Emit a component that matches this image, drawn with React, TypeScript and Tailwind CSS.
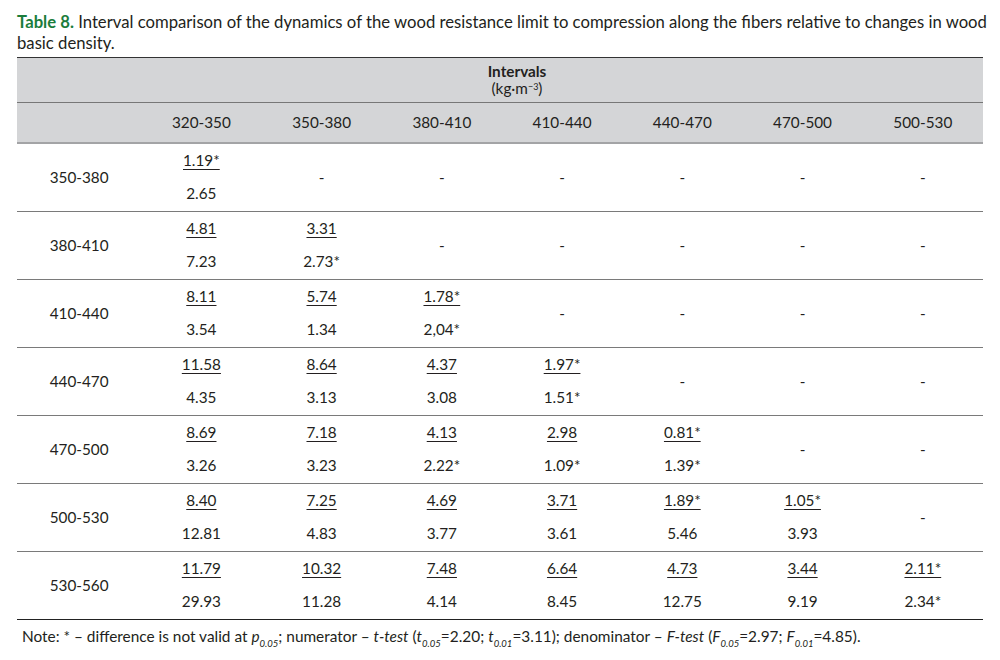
import React from "react";

type Cell = [string, string] | null;

const rows: { label: string; cells: Cell[] }[] = [
  { label: "350-380", cells: [["1.19*", "2.65"], null, null, null, null, null, null] },
  { label: "380-410", cells: [["4.81", "7.23"], ["3.31", "2.73*"], null, null, null, null, null] },
  { label: "410-440", cells: [["8.11", "3.54"], ["5.74", "1.34"], ["1.78*", "2,04*"], null, null, null, null] },
  { label: "440-470", cells: [["11.58", "4.35"], ["8.64", "3.13"], ["4.37", "3.08"], ["1.97*", "1.51*"], null, null, null] },
  { label: "470-500", cells: [["8.69", "3.26"], ["7.18", "3.23"], ["4.13", "2.22*"], ["2.98", "1.09*"], ["0.81*", "1.39*"], null, null] },
  { label: "500-530", cells: [["8.40", "12.81"], ["7.25", "4.83"], ["4.69", "3.77"], ["3.71", "3.61"], ["1.89*", "5.46"], ["1.05*", "3.93"], null] },
  { label: "530-560", cells: [["11.79", "29.93"], ["10.32", "11.28"], ["7.48", "4.14"], ["6.64", "8.45"], ["4.73", "12.75"], ["3.44", "9.19"], ["2.11*", "2.34*"]] },
];

const cols = ["320-350", "350-380", "380-410", "410-440", "440-470", "470-500", "500-530"];

function Sub({ children }: { children: React.ReactNode }) {
  return <sub className="italic text-[9.5px] align-[-3px]">{children}</sub>;
}

export default function App() {
  return (
    <div
      className="w-[1000px] h-[660px] bg-white text-[#231f20] overflow-hidden"
      style={{ fontFamily: "Lato, 'Open Sans', sans-serif" }}
    >
      <div className="pl-[17px] pr-[12px] pt-[12px] text-[16.7px] leading-[21px]">
        <span className="font-bold text-[#1b7d3c]">Table 8.</span> Interval comparison of the dynamics of the wood
        resistance limit to compression along the fibers relative to changes in wood basic density.
      </div>
      <table className="ml-[17px] mt-[3px] w-[966px] border-collapse text-[15.3px] table-fixed">
        <colgroup>
          <col className="w-[124px]" />
          {cols.map((c) => (
            <col key={c} className="w-[120px]" />
          ))}
        </colgroup>
        <thead>
          <tr className="bg-[#d4d5d7] border-t-[1.5px] border-[#333]">
            <td colSpan={8} className="h-[45px] pl-[34px] text-center leading-[17px] border-b border-[#777]">
              <div className="font-bold">Intervals</div>
              <div>
                (kg·m<sup className="text-[9px]">−3</sup>)
              </div>
            </td>
          </tr>
          <tr className="bg-[#d4d5d7] border-b-2 border-[#a3a4a6]">
            <td className="h-[40px]" />
            {cols.map((c) => (
              <td key={c} className="text-center">
                {c}
              </td>
            ))}
          </tr>
        </thead>
        <tbody>
          {rows.map((r, i) => (
            <tr
              key={r.label}
              className={i === rows.length - 1 ? "border-b-[1.5px] border-[#222]" : "border-b border-[#7a7a7a]"}
            >
              <td className="h-[67px] text-center p-0">{r.label}</td>
              {r.cells.map((c, j) => (
                <td key={j} className="text-center p-0">
                  {c ? (
                    <div className="flex flex-col">
                      <div className="h-[33px] flex items-center justify-center">
                        <span className="underline underline-offset-[3px] decoration-[1px]">{c[0]}</span>
                      </div>
                      <div className="h-[34px] flex items-center justify-center">{c[1]}</div>
                    </div>
                  ) : (
                    "-"
                  )}
                </td>
              ))}
            </tr>
          ))}
        </tbody>
      </table>
      <div className="pl-[22px] pt-[5px] text-[15.4px]">
        Note: * – difference is not valid at <i>p</i>
        <Sub>0.05</Sub>; numerator – <i>t-test</i> (<i>t</i>
        <Sub>0.05</Sub>=2.20; <i>t</i>
        <Sub>0.01</Sub>=3.11); denominator – <i>F-test</i> (<i>F</i>
        <Sub>0.05</Sub>=2.97; <i>F</i>
        <Sub>0.01</Sub>=4.85).
      </div>
    </div>
  );
}
